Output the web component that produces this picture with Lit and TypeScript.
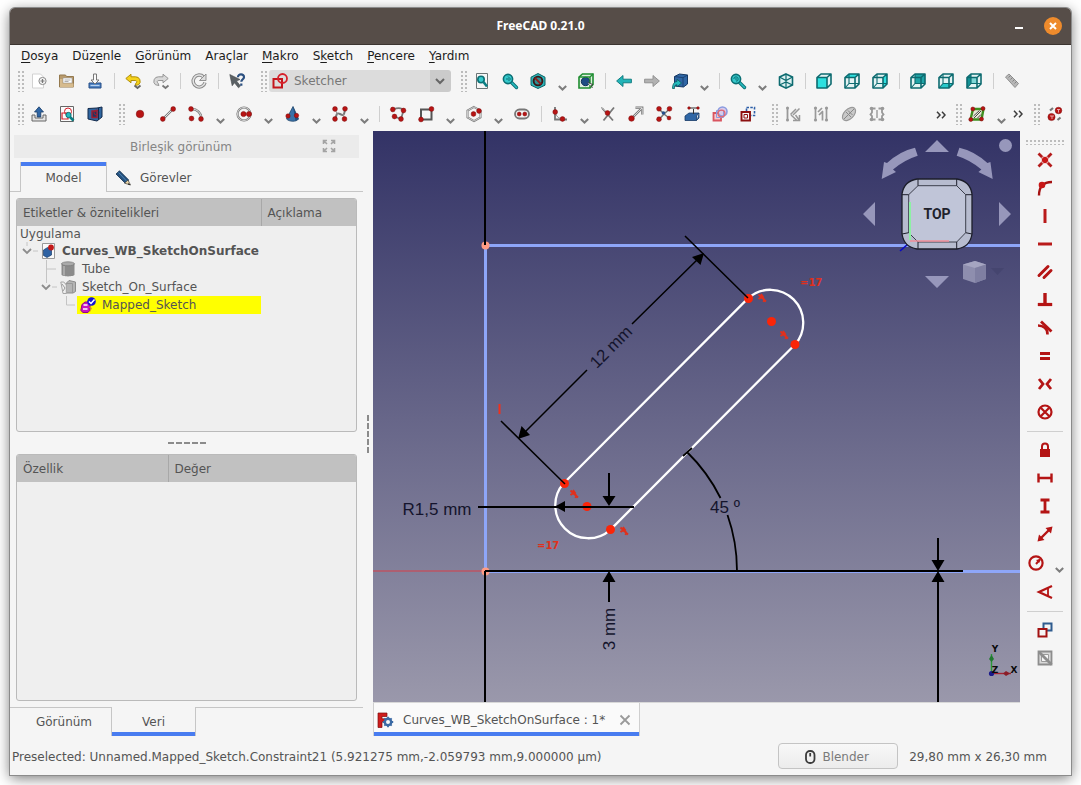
import { LitElement, html, css, svg, nothing } from "lit";
import { customElement, property } from "lit/decorators.js";
import { classMap } from "lit/directives/class-map.js";

const dot = (x: number, y: number, r = 2.4) =>
  svg`<circle cx=${x} cy=${y} r=${r} fill="#b81414" stroke="#7a0c0c" stroke-width=".5"/>`;

const wireCube = (face: unknown) => svg`<path d="M1 4.500 5 1h10v10l-4 4H1z" fill="#e4f3f3"/>${face}
  <path d="M1 4.5 5 1h10v10l-4 4H1zM1 4.5h10V15M11 4.500 15 1" fill="none" stroke="#0d6b70" stroke-width="1.6" stroke-linejoin="round"/>`;
const hiddenEdges = svg`<path d="M5 1v9.500h10M5 10.500 1 15" fill="none" stroke="#0d6b70" stroke-width="1.100"/>`;

const lens = svg`<path d="M9.500 9.500 14.500 14.500" stroke="#0b6f74" stroke-width="3.400" stroke-linecap="round"/>
  <path d="M9.500 9.500 14.500 14.500" stroke="#27bcc0" stroke-width="1.600" stroke-linecap="round"/>
  <circle cx="6" cy="6" r="4.600" fill="#35c9cc" stroke="#0b6f74" stroke-width="1.600"/>`;

const icons: Record<string, unknown> = {
  newDoc: svg`<path d="M1.500 1h8l3 3v11h-11z" fill="#fff" stroke="#d2d2d2"/><circle cx="11.500" cy="8" r="3.600" fill="#f4f4f4" stroke="#8a8a8a" stroke-width="1"/><path d="M11.500 6v4M9.500 8h4" stroke="#777" stroke-width="1.200"/>`,
  open: svg`<path d="M.5 2h6l1 1.500h7V14H.5z" fill="#b99b6c" stroke="#94794e"/><path d="M4 5h9v5H4z" fill="#fff" stroke="#999" stroke-width=".6"/><path d="M5.500 7h6M5.500 8.500h4" stroke="#999" stroke-width=".8"/><path d="M1 6h2.500v4.500h11V14H1z" fill="#d6bb8e"/>`,
  save: svg`<path d="M2 10h12v5H2z" fill="#4b7fc0" stroke="#274f87"/><path d="M3.500 12.500h9" stroke="#b9d3ef" stroke-width="1.200"/><path d="M6.500 1h3v6h2.500L8 11 4 7h2.500z" fill="#fafafa" stroke="#777"/>`,
  undo: svg`<path d="M.8 5.500 6 1.200v2.600h4.500a4.500 4.500 0 0 1 3 8L10 12.500l1-2.500c1.500-1 .8-2.500-.8-2.500H6v2.300z" fill="#f5d21b" stroke="#a88400" stroke-width=".9"/><path d="M9.500 12.500 12.500 15l3-2.500" fill="none" stroke="#666" stroke-width="1.800"/>`,
  redo: svg`<path d="M15.200 5.500 10 1.200v2.600H5.500a4.500 4.500 0 0 0-3 8L6 12.500 5 10C3.500 9 4.200 7.500 5.800 7.500H10v2.300z" fill="#d9d9d9" stroke="#8d8d8d" stroke-width=".9"/><path d="M9.500 12.500 12.500 15l3-2.500" fill="none" stroke="#777" stroke-width="1.800"/>`,
  refresh: svg`<path d="M12.600 4A6 6 0 1 0 14 9.500" fill="none" stroke="#8a8a8a" stroke-width="3.400"/><path d="M12.600 4A6 6 0 1 0 14 9.500" fill="none" stroke="#e4e4e4" stroke-width="1.400"/><path d="M15 1v6.500H8.500z" fill="#ddd" stroke="#8a8a8a" stroke-width=".9"/>`,
  help: svg`<path d="M.8 1.500 11 6.500 7.500 8l4 5-2 1.800-4-5-2.300 3z" fill="#5a6064" stroke="#44494c" stroke-width=".6"/><path d="M9 4.200c0-4 6.200-3.800 6 .1-.1 2-2.600 2-2.700 4.500M12.300 10.500v2.200" fill="none" stroke="#2c5080" stroke-width="2.200"/>`,
  sketcher: svg`<path d="M1.500 6h8.500v8.500H1.500z" fill="none" stroke="#c4161c" stroke-width="2"/><circle cx="10.500" cy="5.500" r="4.500" fill="none" stroke="#d6202a" stroke-width="1.800"/>`,
  fitAll: svg`<path d="M2.500.5h11v15h-11z" fill="#f6f6f6" stroke="#6b7475"/><circle cx="7" cy="6.500" r="3.200" fill="#35c9cc" stroke="#0b6f74" stroke-width="1.600"/><path d="M9.500 9 13 13.500" stroke="#0b7f84" stroke-width="2.600"/>`,
  fitSel: svg`${lens}<path d="M6 3.500 8.500 6 6.500 8M4 6h3" stroke="#0b6f74" fill="none"/>`,
  drawStyle: svg`<path d="m8 .5 7 3.700v8L8 15.500l-7-3.300v-8z" fill="#2cb5b9" stroke="#0b6266"/><circle cx="8" cy="8" r="4.400" fill="#2f9093" stroke="#3b1616" stroke-width="1.900"/><path d="m4.900 4.900 6.200 6.200" stroke="#8f1c1c" stroke-width="2"/>`,
  bbox: svg`<path d="M1 4 4.500 1H15v10.500L12 15H1z" fill="#dfeee0" stroke="#1e8d30" stroke-width="1.600"/><circle cx="7.500" cy="8.500" r="4.200" fill="#1e4c83" stroke="#13325a"/><path d="M1 4h11v11M12 4l3-3" stroke="#1e8d30" stroke-width="1.400" fill="none"/><path d="m9.500 9.500 5.500 2-2.200.8L14.500 15" fill="#fff" stroke="#333" stroke-width=".8"/>`,
  back: svg`<path d="M.6 8 7 2.500v3.700h8.400v3.600H7v3.700z" fill="#22b4b8" stroke="#0b777b" stroke-width=".9"/>`,
  forward: svg`<path d="M15.400 8 9 2.500v3.700H.6v3.600H9v3.700z" fill="#b2b2b2" stroke="#8c8c8c" stroke-width=".9"/>`,
  linkNav: svg`<path d="m2.500 3.500 5-2.500 8 1v9L11.500 14l-9-1z" fill="#2f66a5" stroke="#163a66"/><path d="M2.500 3.500l8.500 1.200L15.500 2M11 4.700V14" stroke="#163a66" fill="none" stroke-width=".8"/><path d="M.5 15.500C.5 11 2.500 8.500 5 8.500V6.200L9.500 10 5 13.800v-2c-2 0-3 1.500-2.500 3.700z" fill="#25b9bd" stroke="#0a5d60" stroke-width=".8"/>`,
  zoomView: svg`${lens}<path d="M3.800 6a2.200 2.200 0 1 1 2.200 2.200M6 4.800v2.400" stroke="#0b6f74" fill="none"/>`,
  iso: svg`<path d="m8 1 6.500 3v8L8 15.200 1.500 12V4z" fill="#ddf1f1" stroke="#0d6b70" stroke-width="1.600"/><path d="M1.500 4 8 7.500 14.500 4M8 7.500v7.700M1.500 12 8 9l6.500 3M8 1v7" fill="none" stroke="#0d6b70" stroke-width="1.200"/>`,
  front: svg`${wireCube(svg`<path d="M1 4.500h10V15H1z" fill="#2ee0df"/>`)}`,
  top: svg`${wireCube(svg`<path d="M1 4.500 5 1h10l-4 3.500z" fill="#2ee0df"/>`)}${hiddenEdges}`,
  right: svg`${wireCube(svg`<path d="m11 4.500 4-3.500v10l-4 4z" fill="#2ee0df"/>`)}${hiddenEdges}`,
  rear: svg`${wireCube(svg`<path d="M5 1h10v9.500H5z" fill="#1fa4a6"/>`)}${hiddenEdges}`,
  bottom: svg`${wireCube(svg`<path d="M1 15 5 10.500h10L11 15z" fill="#27c8c9"/>`)}${hiddenEdges}`,
  left: svg`${wireCube(svg`<path d="M1 4.500 5 1v9.500L1 15z" fill="#149295"/><path d="M5 4.500h6v6H5z" fill="#7fd6d6"/>`)}${hiddenEdges}`,
  ruler: svg`<path d="m1.500 4 3.500-3 9.500 9.500-3.500 4z" fill="#b7b7b7" stroke="#919191"/><path d="m6.500 2.500-2 2M8.500 4.500l-2 2M10.500 6.500l-2 2M12.500 8.500l-2 2" stroke="#777" stroke-width=".8"/>`,

  leave: svg`<path d="M1 9v6h14V9h-3v3H4V9z" fill="#e3e3e3" stroke="#666"/><path d="M6.200 11V6H3.500L8 .8 12.500 6H9.800v5z" fill="#2f66a5" stroke="#163a66" stroke-width=".8"/>`,
  viewSketch: svg`<path d="M1.500.5h13v15h-13z" fill="#fbfbfb" stroke="#666"/><path d="M3 7h6v6H3z" fill="none" stroke="#d6202a" stroke-width="1.200"/><circle cx="9" cy="5.500" r="3.500" fill="none" stroke="#d6202a"/><circle cx="9.500" cy="9" r="2.600" fill="#27bcc0" stroke="#0b6f74"/><path d="m11 11 3.500 3.500" stroke="#0b7f84" stroke-width="2.600"/>`,
  viewSection: svg`<path d="m1 2.500 9-.5 5-1v10l-5 4-9-2z" fill="#2f66a0" stroke="#13294a"/><path d="M5 5h5v6.500H5z" fill="#24345f" stroke="#a01c30" stroke-width="1.400"/><circle cx="9.500" cy="6.500" r="2.500" fill="none" stroke="#a01c30"/><path d="M11.500 2v12" stroke="#13294a"/>`,
  point: dot(8, 8, 3.8),
  line: svg`<path d="M3 13 13 3" stroke="#777" stroke-width="2.400"/><path d="M3 13 13 3" stroke="#eee" stroke-width=".9"/>${dot(2.800, 13)}${dot(13.200, 3)}`,
  arc: svg`<path d="M4 3c5 0 9 4 9.500 9" stroke="#777" stroke-width="2.400" fill="none"/><path d="M4 3c5 0 9 4 9.500 9" stroke="#eee" stroke-width=".9" fill="none"/>${dot(3, 3)}${dot(13, 13)}${dot(3.500, 12.500)}`,
  circle: svg`<circle cx="8" cy="8" r="6.500" fill="none" stroke="#777" stroke-width="2.200"/><circle cx="8" cy="8" r="6.500" fill="none" stroke="#eee" stroke-width=".8"/>${dot(7.500, 8, 2.600)}${dot(13, 8, 2.600)}`,
  conic: svg`<path d="M9 .5 14.500 13c-2 3-9 3-12 0z" fill="#3a72a8" stroke="#1f4469" stroke-width=".8"/><path d="M9 .5 11.500 15l3-2z" fill="#24507d"/>${dot(4, 10, 2.200)}${dot(12.500, 9.500, 2.200)}`,
  bspline: svg`<path d="M3 13c2-4 1-7 5-5s4 1 5-4" stroke="#777" stroke-width="2" fill="none"/><path d="M3.500 4l2 5M11 8l1.500 4.500" stroke="#999" fill="none"/>${dot(3, 3)}${dot(13, 2.800)}${dot(3, 13)}${dot(12.500, 13)}`,
  polyline: svg`<path d="M3 3.500C8 1.500 12 2 13.500 4.500L11 13 4 10.500" stroke="#777" stroke-width="1.700" fill="none"/>${dot(2.800, 3.500)}${dot(13.500, 4.500)}${dot(11, 13)}${dot(4.500, 10.500)}`,
  rect: svg`<path d="M3 3.500h10.500v10H3z" stroke="#555" stroke-width="2" fill="#f6f6f6"/>${dot(13.500, 3)}${dot(3, 13.500)}`,
  hexagon: svg`<path d="m8 1 6.500 3.600v6.800L8 15l-6.500-3.600V4.600z" stroke="#777" stroke-width="2" fill="none"/><path d="m8 1 6.500 3.600v6.800L8 15l-6.500-3.600V4.600z" stroke="#eee" stroke-width=".7" fill="none"/>${dot(7.500, 8)}${dot(13, 5)}`,
  slot: svg`<rect x="1" y="3.500" width="14" height="9" rx="4.500" fill="#f6f6f6" stroke="#777" stroke-width="1.800"/>${dot(5.200, 8, 2)}${dot(10.800, 8, 2)}`,
  fillet: svg`<path d="M3 1v12.500h12" stroke="#777" stroke-width="1.800" fill="none"/><path d="M3 5c1 5 3 7.500 8 8" stroke="#888" fill="none"/>${dot(3.200, 6)}${dot(10.500, 13)}`,
  trim: svg`<path d="M2 2 13 14.500M14 1.500 3.500 14.500" stroke="#777" stroke-width="1.800"/><path d="M1 1l6 6" stroke="#aaa"/>${dot(7.500, 7)}`,
  extend: svg`<path d="m3 13 11-11" stroke="#777" stroke-width="2.400"/><path d="M7.500 1.800H14.200V8.500" fill="none" stroke="#777" stroke-width="2.400"/><path d="M3 13 14 2M7.500 1.800H14.200V8.500" fill="none" stroke="#eee" stroke-width=".8"/>${dot(3.500, 12.500, 2.800)}`,
  split: svg`<path d="M3 3 8 8l5.500-5M8 8l-5 5.500M8 8l5 4" stroke="#777" stroke-width="1.600" fill="none"/>${dot(3, 2.800)}${dot(13.500, 2.800)}${dot(3, 13.200)}${dot(13, 12, 1.900)}<circle cx="7.500" cy="7" r="1.800" fill="#27518c"/>`,
  external: svg`<path d="m1 10 4-3h10l-2.500 3v4.500H1zM12.500 14.500 15 12V7" fill="#2f66a5" stroke="#163a66" stroke-width=".8"/><path d="M9.500 8V3M5 2h9" stroke="#333"/>${dot(5, 2, 1.300)}${dot(14, 2, 1.300)}`,
  carbon: svg`<path d="M1.500 7h7.500v7.500H1.500z" fill="#f9c8cc" stroke="#d95560" stroke-width="1.800"/><circle cx="10.500" cy="5.500" r="4.500" fill="#d8cbea" stroke="#8a9be0" stroke-width="1.600"/><path d="M4.500 4.500h7v7h-7z" fill="none" stroke="#8a9be0"/><circle cx="9.500" cy="7.500" r="3.400" fill="none" stroke="#e06a75" stroke-width="1.400"/>`,
  construction: svg`<path d="M6.500 1.500h8v8h-4M6.500 5V1.500" fill="none" stroke="#2d5fa8" stroke-width="1.600" stroke-dasharray="2.500 1.300"/><path d="M1.500 6h8.500v8.500H1.500z" fill="#f6f6f6" stroke="#8c1010" stroke-width="1.900"/><path d="M4 8.500h3.500V12H4z" fill="none" stroke="#8c1010"/>`,
  vis1: svg`<path d="M2.500 1.500v13" stroke="#999" stroke-width="1.800"/><circle cx="2.500" cy="2" r="1.500" fill="#999"/><circle cx="2.500" cy="14" r="1.500" fill="#999"/><path d="M5.500 8.500 11 3M8 9l6.500-6.500M6 9l6 5.500M10.500 9l4 5.500M14.500 9v5.500H8" stroke="#999" stroke-width="1.500" fill="none"/>`,
  vis2: svg`<path d="M2.500 2v12M13.500 2v12M5 6l4-4M6 9l4-4M9.500 6v8.500" stroke="#999" stroke-width="1.700" fill="none"/><circle cx="2.500" cy="2" r="1.600" fill="#999"/><circle cx="2.500" cy="14" r="1.600" fill="#999"/><circle cx="13.500" cy="2" r="1.600" fill="#999"/><circle cx="13.500" cy="14" r="1.600" fill="#999"/>`,
  vis3: svg`<ellipse cx="8" cy="8" rx="8" ry="4.800" transform="rotate(-45 8 8)" fill="#c9c9c9" stroke="#999" stroke-width="1.200"/><path d="m3 13 10-10M5 6l5 5M7 4.500l4.500 4.500" stroke="#888"/>`,
  vis4: svg`<path d="M6.500 2.500H3v4l-1.500 2L3 10v3.500h3.500M9.500 2.500H13v4l1.500 2L13 10v3.500H9.500" fill="none" stroke="#999" stroke-width="1.800"/><path d="M8 4v8" stroke="#999" stroke-width="1.400"/><circle cx="2.500" cy="2.500" r="1.800" fill="#999"/><circle cx="13.500" cy="2.500" r="1.800" fill="#999"/><circle cx="2.500" cy="13.500" r="1.800" fill="#999"/><circle cx="13.500" cy="13.500" r="1.800" fill="#999"/>`,
  grid: svg`<path d="M4 3h10.500L12.500 13.500H1.500z" fill="#e8e8d8" stroke="#3f8f1f" stroke-width="2.400"/><path d="m4.500 10 6-5.500M5 12l7-7M8.500 12 12 8.500" stroke="#333" stroke-width=".9"/>${dot(3.800, 3, 2)}${dot(14, 2.500, 2)}${dot(1.800, 13.500, 2)}${dot(12.500, 13, 2)}`,
  symbolic: svg`${dot(11.500, 4.500, 3.300)}${dot(4.500, 11, 3.600)}<path d="M3 10h4M5 10v3M10 3.500h3M11.500 3.500v3" stroke="#f4c7c7" stroke-width=".8"/><path d="m3 4.500 3-2.500M10.500 14l3-2.500" stroke="#777" stroke-width="2.200"/>`,

  coincident: svg`<path d="m1.500 1.500 13 13M14.500 1.500l-13 13" stroke="#b41a1a" stroke-width="2.800"/><circle cx="8" cy="8" r="3.700" fill="#c81616" stroke="#f5f5f5" stroke-width=".8"/>`,
  onObject: svg`<path d="M2 15.500C2 7 6 2 15 2" fill="none" stroke="#a51212" stroke-width="2.400"/><circle cx="5" cy="5" r="3.300" fill="#c81616"/>`,
  vertical: svg`<path d="M8 1v14" stroke="#b91a1a" stroke-width="3"/>`,
  horizontal: svg`<path d="M1 8h14" stroke="#b91a1a" stroke-width="3"/>`,
  parallel: svg`<path d="M2 11.500 11 2.500M7 13.500 14 6.500" stroke="#b41414" stroke-width="3" stroke-linecap="round"/>`,
  perpendicular: svg`<path d="M8 1v10" stroke="#b41414" stroke-width="3.400"/><path d="M.8 12.500h14.400" stroke="#b41414" stroke-width="3.200"/>`,
  tangent: svg`<path d="M4 1.500 14.500 11.500" stroke="#b41414" stroke-width="2.800"/><path d="M1 5.500c5 0 10 3 9.500 9" fill="none" stroke="#b41414" stroke-width="2.600"/>`,
  equal: svg`<path d="M3 5.500h10M3 10.500h10" stroke="#b41414" stroke-width="3"/>`,
  symmetric: svg`<path d="m2 3 4 5-4 5M14 3l-4 5 4 5" fill="none" stroke="#b41414" stroke-width="2.800"/>`,
  block: svg`<circle cx="8" cy="8" r="6.500" fill="none" stroke="#b41414" stroke-width="2.200"/><path d="m4 4 8 8M12 4l-8 8" stroke="#b41414" stroke-width="2.200"/>`,
  lock: svg`<path d="M3 7h10v8H3z" fill="#b41414"/><path d="M5 7.500V4.500a3 3 0 0 1 6 0v3" fill="none" stroke="#b41414" stroke-width="2"/>`,
  distX: svg`<path d="M1.500 3.500v9M14.500 3.500v9M1.500 8h13" stroke="#b41414" stroke-width="2.400"/>`,
  distY: svg`<path d="M3.500 2h9M3.500 14h9M8 2v12" stroke="#b41414" stroke-width="2.800"/>`,
  distance: svg`<path d="m3.500 12.500 9-9" stroke="#b41414" stroke-width="2.400"/><path d="M15.500.5 14 7.500 8.500 2zM.5 15.500 2 8.500 7.500 14z" fill="#b41414"/>`,
  radius: svg`<circle cx="8" cy="8" r="6.600" fill="none" stroke="#b41414" stroke-width="2.200"/><path d="M8 9 12 4.500" stroke="#b41414" stroke-width="2"/><path d="M12.500 4 8 5l3.200 3z" fill="#b41414"/>`,
  angle: svg`<path d="M15 2 2 8l13 6" fill="none" stroke="#b41414" stroke-width="2.300"/><path d="M11 3.500v9" fill="none" stroke="#b41414" stroke-width="1.800"/>`,
  driving: svg`<path d="M6.500 1.500h8v7h-8z" fill="none" stroke="#2f5c8f" stroke-width="2"/><path d="M1.500 7h8v7.500h-8z" fill="#f5f5f5" stroke="#a31212" stroke-width="2"/>`,
  activate: svg`<path d="M1.500 1.500h13v13h-13z" fill="#d9d9d9" stroke="#8d8d8d" stroke-width="1.800"/><path d="M4.500 4.500h7v7h-7z" fill="#f5f5f5" stroke="#9a9a9a"/><path d="m2 2 12.500 12.500" stroke="#8d8d8d" stroke-width="2.800"/>`,

  docFile: svg`<path d="M2.500.5h12v15h-12z" fill="#fafafa" stroke="#999"/><path d="m3.500 7 4-2.500 4 1.500v6L7 14.500l-3.500-2z" fill="#2e62a3" stroke="#173c6b" stroke-width=".7"/><circle cx="11" cy="4.500" r="2.900" fill="#c31919"/>`,
  tube: svg`<path d="M1.500 2.500v11c0 2.500 13 2.500 13 0v-11z" fill="#8b8b8b"/><ellipse cx="8" cy="2.800" rx="6.500" ry="2" fill="#aaa" stroke="#777" stroke-width=".7"/><path d="M4 5v9.500" stroke="#a9a9a9" stroke-width="2"/>`,
  surface: svg`<path d="m6 4.500 3-3 6.500 1.500v9.500L13 14H6z" fill="#b4b4b4" stroke="#8d8d8d"/><path d="M6 4.500h6.500V14" fill="none" stroke="#989898"/><path d="M.8 3h3l2.500 3v8.500H3z" fill="#efefef" stroke="#a5a5a5"/><path d="m2 5 3 4-2 3" stroke="#999" fill="none"/>`,
  mapped: svg`<path d="M2 7.500 5 5h5v8l-2 2.500H3L.8 13.500z" fill="#c913c0" stroke="#8d0a86"/><path d="M3.500 8h4M3 12h4.500" stroke="#fff" stroke-width="1.400"/><path d="M9 10l2.500 1-2 4" stroke="#e09a1a" fill="none"/><circle cx="11.500" cy="4.500" r="4.300" fill="#1212d8"/><path d="m9 4.500 2 2 3.500-4" stroke="#fff" stroke-width="1.500" fill="none"/>`,
  pencil: svg`<path d="M1 4 4.500.8l9 9-.5 3-3 .2z" fill="#24517e" stroke="#12304f" stroke-width=".8"/><path d="m3.500 2.500 8 8.500" stroke="#4f86b8"/><path d="M13 10l2.500 5-6-1.800z" fill="#e9d5a8" stroke="#333" stroke-width=".6"/><path d="m13.500 13 2 2.300-2.500-.8z" fill="#111"/>`,
  freecad: svg`<path d="M1 1h9v3.500H5v2.300h3.500V10H5v5.500H1z" fill="#cf1d1d" stroke="#7d0f0f" stroke-width=".7"/><circle cx="11" cy="10" r="3.200" fill="none" stroke="#3c6ba5" stroke-width="2.400"/><path d="M11 4.800v2M11 13.200v2M5.800 10h2M14.200 10h2M7.300 6.300l1.400 1.400M13.300 12.300l1.400 1.400M7.300 13.700l1.400-1.400M13.300 7.700l1.400-1.400" stroke="#3c6ba5" stroke-width="1.800"/>`,
  expand: svg`<path d="M2.500 6V2.500H6M10 2.500h3.500V6M13.500 10v3.500H10M6 13.500H2.500V10M3 3l3 3M13 3l-3 3M13 13l-3-3M3 13l3-3" fill="none" stroke="#a3a3a3" stroke-width="1.600"/>`,
  mouse: svg`<rect x="4" y="2" width="8.500" height="12" rx="4" fill="none" stroke="#3c3c3c" stroke-width="1.800"/><path d="M8.200 4v3.500" stroke="#3c3c3c" stroke-width="1.800"/>`,
  close: svg`<path d="m3.500 3.500 9 9M12.500 3.500l-9 9" stroke="#9a9a9a" stroke-width="1.800"/>`,
};

const icon = (name: string) =>
  html`<svg class="icon" viewBox="0 0 16 16" width="16" height="16" aria-hidden="true">${icons[name]}</svg>`;

type Tool = "sep" | { icon: string; label: string; drop?: boolean };
const t = (icon: string, label: string, drop = false): Tool => ({ icon, label, drop });

const iconStyles = css`
  .icon { display: block; flex: none; overflow: visible; }
`;
const resetStyles = css`
  * { box-sizing: border-box; }
  button, select { margin: 0; padding: 0; border: 0; background: none; font: inherit; color: inherit; }
`;

@customElement("tool-bar")
class ToolBar extends LitElement {
  @property({ attribute: false }) tools: Tool[] = [];
  @property({ type: Boolean, reflect: true }) vertical = false;
  @property({ type: Boolean }) overflow = false;

  static styles = [resetStyles, iconStyles, css`
    :host { display: flex; align-items: center; box-sizing: border-box; height: 32px; }
    :host([vertical]) { flex-direction: column; height: auto; padding-right: 2px; }
    .grip {
      flex: none; width: 6px; height: 22px; margin: 0 1px 0 8px;
      background: radial-gradient(circle at 1px 1px, #bcbcbc 1px, transparent 1px) 0 1px / 4px 4px;
    }
    :host([vertical]) .grip { width: 38px; height: 6px; margin: 8px 0 1px; }
    .sep { flex: none; width: 1px; height: 16px; margin: 0 4px 0 5px; background: #cfcfcf; }
    :host([vertical]) .sep { width: 36px; height: 1px; margin: 5px 0 4px; }
    .tool { flex: none; display: grid; place-items: center; width: 28px; height: 28px; }
    .pair { flex: none; display: flex; }
    .drop { display: grid; align-items: end; justify-items: center; width: 20px; height: 28px; padding-bottom: 4px; }
    :host([vertical]) .pair { padding: 1px 0 1px 2px; }
    .more { flex: none; width: 13px; height: 28px; display: grid; place-items: center; }
  `];

  private tool(item: Exclude<Tool, "sep">) {
    const main = html`<button class="tool" aria-label=${item.label}>${icon(item.icon)}</button>`;
    if (!item.drop) return main;
    return html`<div class="pair">${main}<button class="drop" aria-label=${item.label + " menüsü"}>
      <svg width="9" height="6" viewBox="0 0 9 6"><path d="m.8 1 3.700 3.500L8.200 1" fill="none" stroke="#7d7d7d" stroke-width="2"/></svg>
    </button></div>`;
  }

  render() {
    return html`<span class="grip"></span><slot></slot>
      ${this.tools.map((item) => (item === "sep" ? html`<span class="sep"></span>` : this.tool(item)))}
      ${this.overflow
        ? html`<button class="more" aria-label="Diğer araçlar"><svg width="10" height="8" viewBox="0 0 10 8">
            <path d="m1 .8 3 3.200-3 3.200M6 .8 9 4 6 7.200" fill="none" stroke="#3d3d3d" stroke-width="1.500"/></svg></button>`
        : nothing}`;
  }
}

@customElement("sketch-view")
class SketchView extends LitElement {
  static styles = css`
    :host {
      display: block; position: relative; overflow: hidden;
      background: linear-gradient(#333366, #9a98ab);
    }
    .sketch { display: block; position: absolute; inset: 0; width: 100%; height: 100%; }
    .nav { position: absolute; top: 5px; right: 8px; }
    .axes { position: absolute; right: 0; bottom: 22px; }
    .dim { font: 17px "Liberation Sans", Arial, sans-serif; fill: #14142c; text-anchor: middle; }
    .tag { font: bold 10px "DejaVu Sans", sans-serif; fill: #e0301c; }
    .face { font: bold 14px Roboto, sans-serif; fill: #20222c; text-anchor: middle; }
    .axis { font: bold 9px "DejaVu Sans", sans-serif; fill: #0a0a0a; text-anchor: middle; }
  `;

  private tangents = [[762, 298], [784, 335], [574, 494], [624, 531]];
  private points = [[748.5, 298.5], [771.5, 321.5], [795, 344.5], [564.5, 483.5], [587, 506.5], [610.5, 529.5]];

  render() {
    return html`
      <svg class="sketch" viewBox="373 131 647 571" preserveAspectRatio="xMinYMin slice" role="img" aria-label="Mapped_Sketch">
        <path d="M373 571H485" stroke="#bb5563" stroke-width="1.500"/>
        <path d="M485.500 245V572M485.500 245.500H1020M485.500 571.500H1020" stroke="#8ea6f8" stroke-width="3" fill="none"/>
        <circle cx="485.500" cy="245.500" r="4" fill="#ff9c84"/><circle cx="485.500" cy="571.500" r="4" fill="#ff9c84"/>
        <path d="M485 131V245M485 571V702M485 571H963" stroke="#000" stroke-width="2" fill="none"/>
        <path d="M563.700 483.200 748.200 298.200A33 33 0 0 1 794.800 344.800L610.300 529.800A33 33 0 0 1 563.700 483.200Z" fill="none" stroke="#fff" stroke-width="2.300"/>
        ${this.points.map(([x, y]) => svg`<circle cx=${x} cy=${y} r="4.500" fill="#fb2508"/>`)}
        ${this.tangents.map(([x, y]) => svg`<path transform=${`translate(${x} ${y})`} d="M-3.500-3.500 4 3.500M-3.500 1C0-2 3 0 1.500 4M-1-4 1.500-.5" fill="none" stroke="#e0301c" stroke-width="1.800"/>`)}
        <path d="M685 236 748 298M501 421 565 484M700 257 632 324M587 370 522 435" stroke="#000" stroke-width="1.500"/>
        <path d="M704 253 700.500 265 692 257ZM518 439 521.500 426 530 435Z"/>
        <path d="M478 507H634M609 473V500M609 577V602M938 538V566M938 576V702" stroke="#000" stroke-width="2"/>
        <path d="M555 506.500 565 501V512ZM609 506 602.500 496H615.500ZM609 571 602.500 582H615.500ZM938 571 931.500 560H944.500ZM938 571 931.500 582H944.500Z"/>
        <path d="M687 452A168 168 0 0 1 720.500 498M727.500 515A168 168 0 0 1 737 571M683 456 692 448" fill="none" stroke="#000" stroke-width="1.800"/>
        <path d="M499.500 404V414" stroke="#f0301c" stroke-width="2"/>
        <text class="dim" x="437" y="515">R1,5 mm</text>
        <text class="dim" x="725" y="513">45 º</text>
        <text class="dim" transform="translate(615 351) rotate(-45)">12 mm</text>
        <text class="dim" transform="translate(615 629) rotate(-90)">3 mm</text>
        <text class="tag" x="800" y="286">=17</text>
        <text class="tag" x="537" y="549">=17</text>
      </svg>
      <svg class="nav" viewBox="860 136 152 156" width="152" height="156" role="img" aria-label="Gezinme küpü">
        <g fill="#9797bb">
          <circle cx="1005.500" cy="145.500" r="6.500"/>
          <path d="M937 140 949 152H925ZM863 214 875 202V226ZM1011 214 999 202V226ZM937 288 949 276H925Z"/>
          <path d="M915 147.700Q900 151 887 163L884 162 881.700 179 896 172 893 169.500Q904 160 917.700 155.700Z"/>
          <path d="M959.400 147.700Q974.400 151 987.400 163L990.400 162 992.700 179 978.400 172 981.400 169.500Q970.400 160 956.700 155.700Z"/>
        </g>
        <path d="M900 251 908 244" stroke="#0808c8" stroke-width="1.600"/>
        <path d="M917 179H957Q970 181 972 194V234Q970 247 957 249H917Q904 247 902 234V194Q904 181 917 179Z" fill="#b7bccf" stroke="#1c1e2a" stroke-width="1.300"/>
        <path d="M918 185.700H956.700L965.700 194.700V232.700L956.700 242H918L908.700 232.700V194.700Z" fill="#c0c5d8" stroke="#1c1e2a" stroke-width=".8"/>
        <path d="M918 185.700V179M956.700 185.700V179M965.700 194.700H972M965.700 232.700 972 234M956.700 242V249M918 242V249M908.700 232.700 902 234M908.700 194.700H902" stroke="#1c1e2a"/>
        <path d="M910 202V240" stroke="#8df0a4" stroke-width="2"/><path d="M910 241H949" stroke="#f08e98" stroke-width="1.500"/>
        <text class="face" x="937" y="219">TOP</text>
        <path d="M963 264.500 975 261 986 264.500V279L975 283 963 279Z" fill="#8e8eae"/>
        <path d="M963 264.500 975 268 986 264.500 975 261Z" fill="#a5a5c1"/><path d="M975 268V283L986 279V264.500Z" fill="#7f7fa2"/>
        <path d="M991 268H1004L997.500 275Z" fill="#45456f"/>
      </svg>
      <svg class="axes" viewBox="985 643 35 37" width="35" height="37" role="img" aria-label="Eksenler">
        <path d="M991.500 673V654" stroke="#2a9b3a" stroke-width="1.400"/><path d="M991.500 655 989 659 991.500 662 994 659Z" fill="#207a30"/>
        <path d="M991 673.500H1011" stroke="#a52331" stroke-width="1.400"/><path d="M1010 673.500 1006 671 1003 673.500 1006 676Z" fill="#8a1d28"/>
        <circle cx="991.500" cy="673.500" r="2.600" fill="#1a1a8a"/>
        <text class="axis" x="995" y="652">Y</text><text class="axis" x="1014" y="673">X</text><text class="axis" x="995" y="673">Z</text>
      </svg>`;
  }
}

@customElement("app-root")
class AppRoot extends LitElement {
  static styles = [resetStyles, iconStyles, css`
    :host {
      display: flex; box-sizing: border-box; min-height: 100vh; padding: 8px 10px 10px;
      background: #fff; color: #545454;
      font: 12px/18px "DejaVu Sans", Verdana, sans-serif;
    }
    .window {
      flex: 1; min-width: 0; display: flex; flex-direction: column; background: #f5f5f5;
      border-radius: 5px 5px 0 0; box-shadow: 0 0 0 1px #8b8b8b, 0 3px 14px rgba(0, 0, 0, .55);
    }
    .title {
      display: grid; grid-template-columns: 1fr auto 1fr; align-items: center; height: 37px; padding: 0 9px;
      background: #564d48; border-bottom: 1px solid #3b3430; border-radius: 5px 5px 0 0;
    }
    .title h1 { grid-column: 2; margin: 0; font: bold 12px/18px "Noto Sans", sans-serif; color: #fff; }
    .controls { display: flex; justify-content: flex-end; align-items: center; gap: 16px; }
    .controls button { display: grid; place-items: center; width: 18px; height: 18px; border-radius: 9px; }
    .controls .quit { background: #ee8b2c; }
    .menu { display: flex; height: 20px; padding: 2px 4px 0; color: #1c1c1c; }
    .menu button { padding: 0 7px; }
    .menu u { text-underline-offset: 2px; }
    .row { display: flex; height: 33px; }
    .row tool-bar { flex: none; margin-right: 2px; }
    .row .fill { flex: 1; justify-content: flex-start; }
    .spring { flex: 1; }
    .bench { position: relative; width: 182px; margin-left: 1px; color: #777; }
    .bench select {
      display: block; appearance: none; width: 100%; height: 22px; padding-left: 25px; border-radius: 3px;
      background: linear-gradient(90deg, #dcdcdc 161px, #cbcbcb 161px);
    }
    .bench .icon { position: absolute; left: 3px; top: 3px; pointer-events: none; }
    .bench .arrow { position: absolute; right: 6px; top: 8px; pointer-events: none; }
    .main { flex: 1; min-height: 0; display: grid; grid-template-columns: 353px 10px minmax(0, 1fr) 51px; }
    .dock { display: flex; flex-direction: column; }
    .dock h2 {
      position: relative; margin: 4px 4px 0; padding-right: 11px; height: 23px; background: #ebebeb;
      font: inherit; line-height: 24px; text-align: center; color: #858585;
    }
    .dock h2 button { position: absolute; right: 22px; top: 3px; }
    .tabs { display: flex; height: 30px; margin-top: 4px; }
    .tabs::before { content: ""; width: 10px; border-bottom: 1px solid #c6c6c6; }
    .tabs::after { content: ""; flex: 1; border-bottom: 1px solid #c6c6c6; }
    .tab { display: flex; align-items: center; justify-content: center; gap: 9px; border-bottom: 1px solid #c6c6c6; padding: 2px 8px 0; }
    .tab.on { width: 87px; border: solid #c6c6c6; border-width: 0 1px; box-shadow: inset 0 4px #487cf0; }
    .tab.on { padding-top: 1px; }
    .pane { margin: 0 6px; border: 1px solid #bababa; border-radius: 3px; background: #efefef; overflow: hidden; }
    .tree { flex: 234 1 0; margin-top: 6px; }
    .props { flex: 247 1 0; }
    table { width: 100%; border-collapse: collapse; table-layout: fixed; }
    th { height: 27px; padding: 0 6px; background: #c1c1c1; font-weight: normal; text-align: left; }
    th + th { border-left: 1px solid #a8a8a8; }
    .tree th:first-child { width: 244px; }
    .props th:first-child { width: 151px; }
    td { padding: 0; }
    .node { display: flex; height: 18px; white-space: nowrap; }
    .root { padding-left: 3px; height: 16px; line-height: 16px; }
    .guide { flex: none; display: block; }
    .entry { flex: 1; display: flex; align-items: center; gap: 6px; padding-left: 1px; }
    .entry.doc { font-weight: bold; }
    .entry.picked { background: #ffff00; padding-left: 3px; }
    .split { height: 22px; display: grid; place-items: center; }
    .split i { width: 38px; height: 2px; background: repeating-linear-gradient(90deg, #8b8b8b 0 6px, transparent 6px 8px); }
    .vsplit { display: grid; place-items: center; }
    .vsplit i { width: 2px; height: 38px; background: repeating-linear-gradient(#8b8b8b 0 6px, transparent 6px 8px); }
    .lower { display: flex; height: 29px; margin-top: 6px; }
    .lower button { border-top: 1px solid #c6c6c6; width: 101px; padding-left: 7px; }
    .lower .on { width: 85px; padding: 0; border: solid #c6c6c6; border-width: 0 1px; box-shadow: inset 0 -4px #487cf0; }
    .lower::after { content: ""; flex: 1; border-top: 1px solid #c6c6c6; }
    .mdi { display: flex; flex-direction: column; min-width: 0; }
    .mdi sketch-view { flex: 1; }
    .docs { display: flex; height: 34px; border-top: 1px solid #d8d8d8; }
    .doctab {
      display: flex; align-items: center; gap: 10px; width: 267px; padding: 0 6px 0 3px;
      border: solid #cfcfcf; border-width: 0 1px; box-shadow: inset 0 -4px #487cf0; background: #fafafa;
    }
    .doctab button { text-align: left; }
    .doctab .name { flex: 1; display: flex; align-items: center; gap: 10px; white-space: nowrap; }
    .status { display: flex; align-items: center; height: 39px; padding: 0 24px 0 2px; gap: 11px; }
    .status p { margin: 0; white-space: nowrap; padding-top: 2px; }
    .status .message { flex: 1; overflow: hidden; }
    .status button {
      display: flex; align-items: center; justify-content: center; gap: 4px; width: 120px; height: 26px; color: #7a7a7a;
      border: 1px solid #c4c4c4; border-radius: 4px; background: linear-gradient(#f8f8f8, #ececec); padding: 2px 5px 0 0;
    }
  `];

  private menus: [string, string, string][] = [
    ["", "D", "osya"], ["Düz", "e", "nle"], ["", "G", "örünüm"], ["Ara", "", "çlar"],
    ["", "M", "akro"], ["S", "k", "etch"], ["", "P", "encere"], ["", "Y", "ardım"],
  ];

  private file = [
    t("newDoc", "Yeni"), t("open", "Aç"), t("save", "Kaydet"), "sep" as const,
    t("undo", "Geri al"), t("redo", "Yinele"), "sep" as const, t("refresh", "Yenile"), "sep" as const, t("help", "Bu nedir?"),
  ];
  private view = [
    t("fitAll", "Tümünü sığdır"), t("fitSel", "Seçimi sığdır"), t("drawStyle", "Çizim stili", true), t("bbox", "Sınır kutusu"), "sep" as const,
    t("back", "Geri"), t("forward", "İleri"), t("linkNav", "Bağlantıya git", true), "sep" as const,
    t("zoomView", "Yakınlaştır", true), t("iso", "İzometrik"), "sep" as const,
    t("front", "Ön"), t("top", "Üst"), t("right", "Sağ"), "sep" as const,
    t("rear", "Arka"), t("bottom", "Alt"), t("left", "Sol"), "sep" as const, t("ruler", "Ölç"),
  ];
  private sketch = [t("leave", "Eskizden çık"), t("viewSketch", "Eskizi görüntüle"), t("viewSection", "Kesit görünümü")];
  private geometry = [
    t("point", "Nokta"), t("line", "Çizgi"), t("arc", "Yay", true), t("circle", "Çember", true), t("conic", "Konik", true),
    t("bspline", "B-spline", true), "sep" as const, t("polyline", "Çoklu çizgi"), t("rect", "Dikdörtgen", true),
    t("hexagon", "Çokgen", true), t("slot", "Yuva"), "sep" as const, t("fillet", "Radyus", true), t("trim", "Kırp"),
    t("extend", "Uzat"), t("split", "Böl"), t("external", "Dış geometri"), t("carbon", "Karbon kopya"), t("construction", "Yapı geometrisi"),
  ];
  private visual = [t("vis1", "Dikey kısıtlar"), t("vis2", "Yatay kısıtlar"), t("vis3", "Elips"), t("vis4", "Simetri")];
  private gridTools = [t("grid", "Izgara", true)];
  private virtualTools = [t("symbolic", "Sanal alan")];
  private constraints = [
    t("coincident", "Çakışık"), t("onObject", "Nesne üzerinde"), t("vertical", "Dikey"), t("horizontal", "Yatay"),
    t("parallel", "Paralel"), t("perpendicular", "Dik"), t("tangent", "Teğet"), t("equal", "Eşit"), t("symmetric", "Simetrik"),
    t("block", "Blok"), "sep" as const, t("lock", "Kilit"), t("distX", "Yatay mesafe"), t("distY", "Dikey mesafe"),
    t("distance", "Mesafe"), t("radius", "Yarıçap", true), t("angle", "Açı"), "sep" as const,
    t("driving", "Sürücü kısıt"), t("activate", "Etkinleştir"),
  ];

  private nodes = [
    { name: "Curves_WB_SketchOnSurface", icon: "docFile", width: 22, kind: "doc", guide: "M10 0V4M16 9h5", chevron: 10 },
    { name: "Tube", icon: "tube", width: 42, kind: "", guide: "M29.500 0V18M30 9h9", chevron: 0 },
    { name: "Sketch_On_Surface", icon: "surface", width: 42, kind: "", guide: "M29.500 0V5M35 9h5", chevron: 29 },
    { name: "Mapped_Sketch", icon: "mapped", width: 60, kind: "picked", guide: "M49.500 0V9H58", chevron: 0 },
  ];

  render() {
    return html`
      <div class="window">
        <header class="title">
          <h1>FreeCAD 0.21.0</h1>
          <div class="controls">
            <button aria-label="Küçült"><svg width="8" height="8" viewBox="0 0 8 8"><path d="M0 6h8" stroke="#fff" stroke-width="2"/></svg></button>
            <button class="quit" aria-label="Kapat"><svg width="8" height="8" viewBox="0 0 8 8"><path d="m1 1 6 6M7 1 1 7" stroke="#fff" stroke-width="2"/></svg></button>
          </div>
        </header>
        <nav class="menu">
          ${this.menus.map(([a, key, b]) => html`<button>${a}${key ? html`<u>${key}</u>` : nothing}${b}</button>`)}
        </nav>
        <div class="row">
          <tool-bar .tools=${this.file}></tool-bar>
          <tool-bar>
            <div class="bench">
              <select aria-label="Tezgâh"><option>Sketcher</option></select>
              ${icon("sketcher")}
              <svg class="arrow" width="10" height="7" viewBox="0 0 10 7"><path d="m1 1 4 4 4-4" fill="none" stroke="#666" stroke-width="2"/></svg>
            </div>
          </tool-bar>
          <tool-bar class="fill" .tools=${this.view}></tool-bar>
        </div>
        <div class="row">
          <tool-bar .tools=${this.sketch}></tool-bar>
          <tool-bar .tools=${this.geometry}></tool-bar>
          <tool-bar .tools=${this.visual}></tool-bar>
          <span class="spring"></span>
          <tool-bar-more></tool-bar-more>
          <tool-bar .tools=${this.gridTools} overflow></tool-bar>
          <tool-bar .tools=${this.virtualTools}></tool-bar>
        </div>
        <main class="main">
          <section class="dock">
            <h2>Birleşik görünüm<button aria-label="Paneli ayır">${icon("expand")}</button></h2>
            <div class="tabs" role="tablist">
              <button class="tab on" role="tab" aria-selected="true">Model</button>
              <button class="tab" role="tab" aria-selected="false">${icon("pencil")}Görevler</button>
            </div>
            <div class="pane tree">
              <table>
                <thead><tr><th>Etiketler &amp; öznitelikleri</th><th>Açıklama</th></tr></thead>
                <tbody>
                  <tr><td><div class="node root">Uygulama</div></td><td></td></tr>
                  ${this.nodes.map((n) => html`<tr><td><div class="node">
                    <svg class="guide" width=${n.width} height="18" viewBox=${`0 0 ${n.width} 18`} aria-hidden="true">
                      <path d=${n.guide} fill="none" stroke="#c4c4c4"/>
                      ${n.chevron ? svg`<path d=${`M${n.chevron - 4} 7l4 4 4-4`} fill="none" stroke="#8d8d8d" stroke-width="1.800"/>` : nothing}
                    </svg>
                    <div class=${classMap({ entry: true, doc: n.kind === "doc", picked: n.kind === "picked" })}>${icon(n.icon)}${n.name}</div>
                  </div></td><td></td></tr>`)}
                </tbody>
              </table>
            </div>
            <div class="split"><i></i></div>
            <div class="pane props">
              <table><thead><tr><th>Özellik</th><th>Değer</th></tr></thead></table>
            </div>
            <div class="lower" role="tablist">
              <button role="tab" aria-selected="false">Görünüm</button>
              <button class="on" role="tab" aria-selected="true">Veri</button>
            </div>
          </section>
          <div class="vsplit"><i></i></div>
          <section class="mdi">
            <sketch-view></sketch-view>
            <div class="docs">
              <div class="doctab">
                <button class="name">${icon("freecad")}Curves_WB_SketchOnSurface : 1*</button>
                <button aria-label="Belgeyi kapat">${icon("close")}</button>
              </div>
            </div>
          </section>
          <tool-bar vertical .tools=${this.constraints}></tool-bar>
        </main>
        <footer class="status">
          <p class="message">Preselected: Unnamed.Mapped_Sketch.Constraint21 (5.921275 mm,-2.059793 mm,9.000000 µm)</p>
          <button>${icon("mouse")}Blender</button>
          <p>29,80 mm x 26,30 mm</p>
        </footer>
      </div>`;
  }
}

@customElement("tool-bar-more")
class ToolBarMore extends LitElement {
  static styles = [resetStyles, css`
    :host { display: grid; place-items: center; width: 15px; }
    button { display: grid; place-items: center; width: 15px; height: 28px; }
  `];
  render() {
    return html`<button aria-label="Diğer araçlar"><svg width="10" height="8" viewBox="0 0 10 8">
      <path d="m1 .8 3 3.200-3 3.200M6 .8 9 4 6 7.200" fill="none" stroke="#3d3d3d" stroke-width="1.500"/></svg></button>`;
  }
}
